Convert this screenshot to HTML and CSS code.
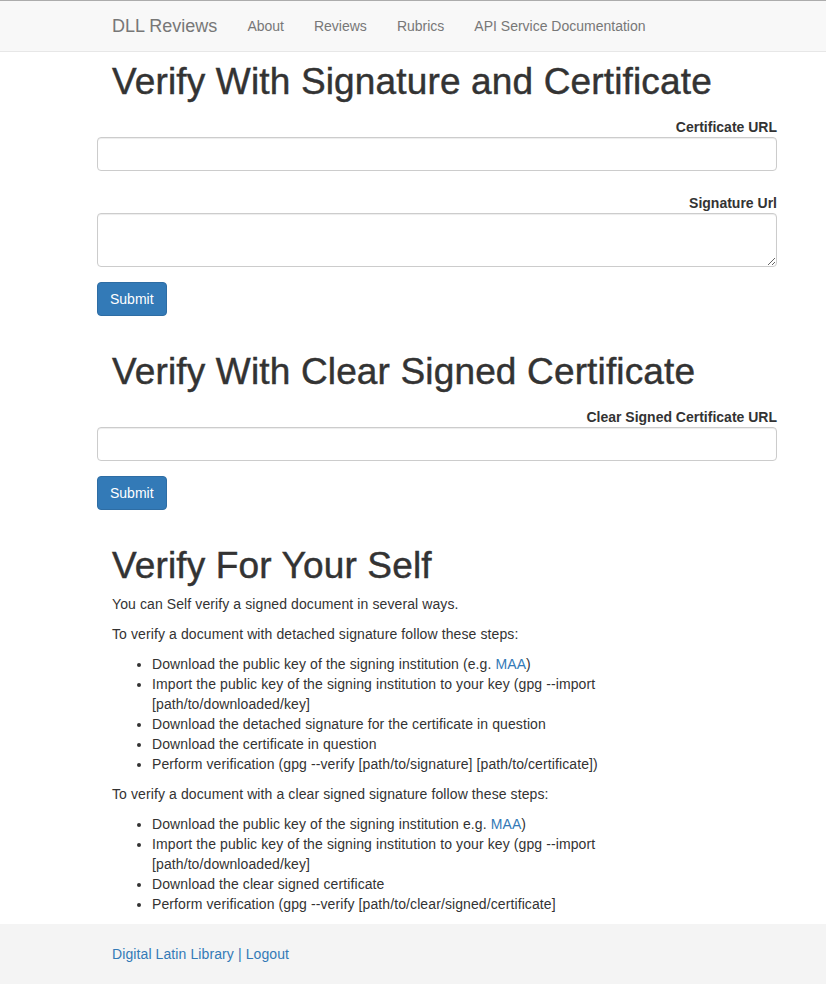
FILE: index.html
```html
<!DOCTYPE html>
<html lang="en">
<head>
<meta charset="utf-8">
<title>DLL Reviews - Verify</title>
<link rel="stylesheet" href="styles.css">
</head>
<body>
<nav class="navbar">
  <div class="wrap nav-inner">
    <a class="brand" href="#">DLL Reviews</a>
    <ul class="nav-links">
      <li><a href="#">About</a></li>
      <li><a href="#">Reviews</a></li>
      <li><a href="#">Rubrics</a></li>
      <li><a href="#">API Service Documentation</a></li>
    </ul>
  </div>
</nav>

<main class="wrap page">
  <section class="verify-form">
    <h1 class="title">Verify With Signature and Certificate</h1>
    <form class="form">
      <div class="form-group">
        <label class="control-label" for="cert">Certificate URL</label>
        <input class="form-control" id="cert" type="text">
      </div>
      <div class="form-group">
        <label class="control-label" for="sig">Signature Url</label>
        <textarea class="form-control textarea" id="sig"></textarea>
      </div>
      <div class="form-group">
        <button class="btn" type="button">Submit</button>
      </div>
    </form>
  </section>

  <section class="verify-form">
    <h1 class="title">Verify With Clear Signed Certificate</h1>
    <form class="form">
      <div class="form-group">
        <label class="control-label" for="clear">Clear Signed Certificate URL</label>
        <input class="form-control" id="clear" type="text">
      </div>
      <div class="form-group">
        <button class="btn" type="button">Submit</button>
      </div>
    </form>
  </section>

  <section class="self-verify">
    <h1 class="title">Verify For Your Self</h1>
    <p>You can Self verify a signed document in several ways.</p>
    <p>To verify a document with detached signature follow these steps:</p>
    <ul class="steps">
      <li>Download the public key of the signing institution (e.g. <a href="#">MAA</a>)</li>
      <li>Import the public key of the signing institution to your key (gpg --import [path/to/downloaded/key]</li>
      <li>Download the detached signature for the certificate in question</li>
      <li>Download the certificate in question</li>
      <li>Perform verification (gpg --verify [path/to/signature] [path/to/certificate])</li>
    </ul>
    <p>To verify a document with a clear signed signature follow these steps:</p>
    <ul class="steps">
      <li>Download the public key of the signing institution e.g. <a href="#">MAA</a>)</li>
      <li>Import the public key of the signing institution to your key (gpg --import [path/to/downloaded/key]</li>
      <li>Download the clear signed certificate</li>
      <li>Perform verification (gpg --verify [path/to/clear/signed/certificate]</li>
    </ul>
  </section>
</main>

<footer class="footer">
  <div class="wrap footer-inner">
    <a href="#">Digital Latin Library</a> | <a href="#">Logout</a>
  </div>
</footer>
</body>
</html>
```

FILE: styles.css
```css
* {
  box-sizing: border-box;
}

html, body {
  margin: 0;
  padding: 0;
}

body {
  font-family: "Liberation Sans", Arial, Helvetica, sans-serif;
  font-size: 14px;
  line-height: 20px;
  color: #333;
  background: #fff;
  letter-spacing: 0.1px;
}

a {
  color: #337ab7;
  text-decoration: none;
}

.wrap {
  margin-left: 97px;
  width: 680px;
}

/* Navbar */
.navbar {
  background: #f8f8f8;
  border-top: 1px solid #acacac;
  border-bottom: 1px solid #e7e7e7;
}

.nav-inner {
  display: flex;
  align-items: center;
  height: 50px;
  letter-spacing: 0;
}

.brand {
  padding: 0 15px;
  font-size: 18px;
  line-height: 20px;
  color: #777;
}

.nav-links {
  display: flex;
  list-style: none;
  margin: 0;
  padding: 0;
}

.nav-links a {
  display: block;
  padding: 0 15px;
  color: #777;
  line-height: 20px;
}

/* Headings */
.title {
  font-size: 37px;
  font-weight: 500;
  line-height: 40px;
  letter-spacing: 0.15px;
  margin: 36px 0 8px;
  padding: 0 15px;
  color: #333;
  -webkit-text-stroke: 0.45px #333;
}

.verify-form:first-child .title {
  margin-top: 10px;
}

/* Forms */
.form {
  margin: 0;
}

.form-group {
  margin-bottom: 15px;
}

.control-label {
  display: block;
  padding-top: 7px;
  margin: 0;
  text-align: right;
  font-weight: bold;
  line-height: 20px;
  letter-spacing: 0;
}

.form-control {
  display: block;
  width: 100%;
  height: 34px;
  padding: 6px 12px;
  font-family: inherit;
  font-size: 14px;
  line-height: 20px;
  color: #555;
  background: #fff;
  border: 1px solid #ccc;
  border-radius: 4px;
  box-shadow: inset 0 1px 1px rgba(0, 0, 0, 0.075);
  margin: 0;
}

.textarea {
  height: 54px;
  resize: vertical;
}

.btn {
  display: inline-block;
  height: 34px;
  padding: 6px 12px;
  font-family: inherit;
  font-size: 14px;
  line-height: 20px;
  letter-spacing: 0;
  color: #fff;
  background: #337ab7;
  border: 1px solid #2e6da4;
  border-radius: 4px;
  cursor: pointer;
  vertical-align: top;
}

/* Self verify */
.self-verify {
  padding: 0 65px 0 15px;
}

.self-verify .title {
  padding: 0;
}

.self-verify p {
  margin: 0 0 10px;
}

.steps {
  margin: 0 0 10px;
  padding-left: 40px;
}

/* Footer */
.footer {
  background: #f4f4f4;
  padding: 20px 0 20px;
  color: #337ab7;
}

.footer-inner {
  padding: 0 15px;
}
```
